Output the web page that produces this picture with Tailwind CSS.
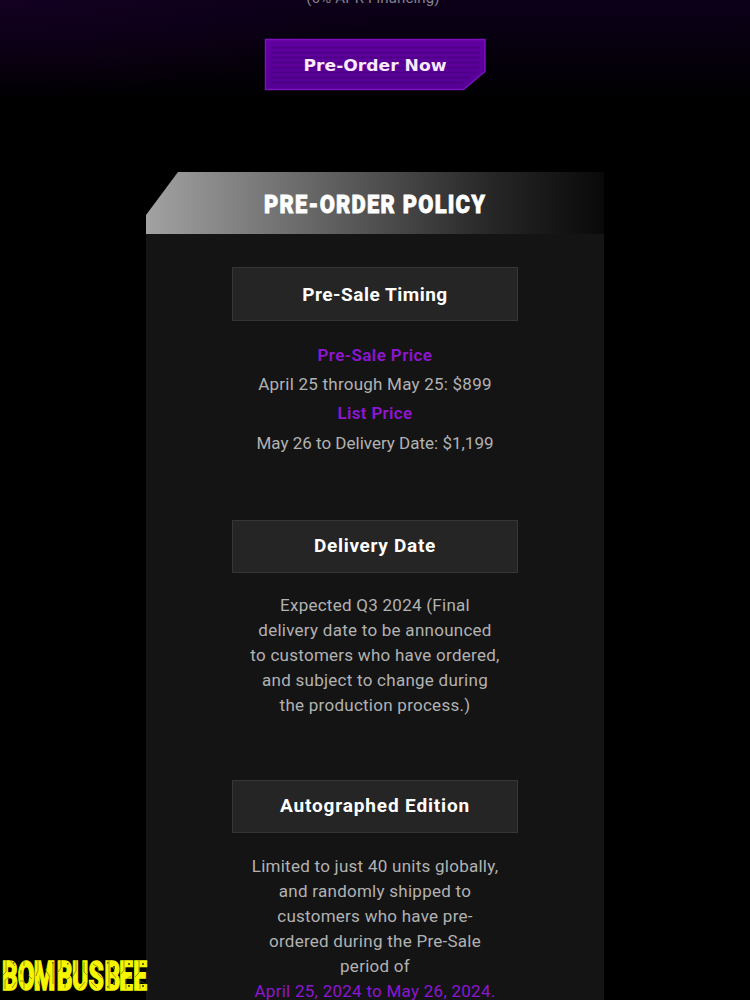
<!DOCTYPE html>
<html lang="en">
<head>
  <meta charset="UTF-8" />
  <meta name="viewport" content="width=device-width, initial-scale=1.0"/>
  <title>Pre-Order Policy</title>
  <script src="https://cdn.jsdelivr.net/npm/@tailwindcss/browser@4"></script>
</head>
<body class="relative h-[1000px] overflow-hidden bg-black font-['Roboto',sans-serif] text-[#b2b2b2]">

  <!-- Hero bottom -->
  <section class="flex h-[172px] flex-col items-center bg-[radial-gradient(ellipse_380px_100px_at_0_0,#1c002b80,transparent),linear-gradient(#0c0019,#000_100px)]">
    <p class="-mt-[12px] h-[51px] pr-1 text-[15px] leading-5 tracking-[0.15px] text-[#85818c]">(0% APR Financing)</p>
    <a href="#" class="block h-[52px] w-[222px]">
      <svg class="block overflow-visible" width="222" height="52" viewBox="0 0 222 52">
        <defs>
          <linearGradient id="btn" x1="0" y1="0" x2="0" y2="1">
            <stop offset="0" stop-color="#6200a2"/>
            <stop offset="1" stop-color="#550095"/>
          </linearGradient>
          <pattern id="lines" width="5" height="5" patternUnits="userSpaceOnUse">
            <rect y="2.5" width="5" height="2" fill="#450079"/>
          </pattern>
        </defs>
        <path d="M1.5 .5H221V32.5L199.5 50.5H1.5Z" fill="url(#btn)" stroke="#7b10bd" stroke-width="1.5"/>
        <path d="M7 4H216V31L195 47H7Z" fill="url(#lines)" fill-opacity=".6"/>
        <text x="39.5" y="32" textLength="143" lengthAdjust="spacingAndGlyphs" font-family="DejaVu Sans" font-weight="700" font-size="16.5" fill="#fbeaff">Pre-Order Now</text>
      </svg>
    </a>
  </section>

  <!-- Policy card -->
  <main class="mx-auto h-[828px] w-[458px] bg-[#141414] text-center">
    <svg class="block bg-black" width="458" height="62" viewBox="0 0 458 62">
      <defs>
        <linearGradient id="head" x1="0" x2="1">
          <stop offset="0" stop-color="#a2a2a2"/>
          <stop offset=".5" stop-color="#505050"/>
          <stop offset=".75" stop-color="#272727"/>
          <stop offset="1" stop-color="#090909"/>
        </linearGradient>
      </defs>
      <path d="M32 0H458V62H0V43Z" fill="url(#head)"/>
      <g transform="translate(118 41) scale(.86 1)">
        <text textLength="257" lengthAdjust="spacing" font-family="Roboto" font-weight="900" font-size="25.5" fill="#fff" stroke="#fff" stroke-width=".8">PRE-ORDER POLICY</text>
      </g>
    </svg>

    <div class="flex flex-col items-center pt-[33px]">
      <h3 class="flex h-[54px] w-[286px] items-center justify-center border border-[#363636] bg-[#252525] pt-0.5 text-[19px] font-bold tracking-[0.5px] text-white">Pre-Sale Timing</h3>
      <div class="mt-5 text-[17px] leading-[29.2px]">
        <p class="font-semibold tracking-[0.42px] text-[#8d16d2]">Pre-Sale Price</p>
        <p class="tracking-[0.23px]">April 25 through May 25: $899</p>
        <p class="font-semibold tracking-[0.3px] text-[#8d16d2]">List Price</p>
        <p>May 26 to Delivery Date: $1,199</p>
      </div>

      <h3 class="mt-[62px] flex h-[53px] w-[286px] items-center justify-center border border-[#363636] bg-[#252525] text-[19px] font-bold tracking-[0.7px] text-white">Delivery Date</h3>
      <div class="mt-5 text-[17px] leading-[25px] tracking-[0.26px]">
        <p>Expected Q3 2024 (Final</p>
        <p>delivery date to be announced</p>
        <p>to customers who have ordered,</p>
        <p>and subject to change during</p>
        <p>the production process.)</p>
      </div>

      <h3 class="mt-[62px] flex h-[53px] w-[286px] items-center justify-center border border-[#363636] bg-[#252525] text-[19px] font-bold tracking-[0.85px] text-white">Autographed Edition</h3>
      <div class="mt-[21px] text-[17px] leading-[25px] tracking-[0.26px]">
        <p>Limited to just 40 units globally,</p>
        <p>and randomly shipped to</p>
        <p>customers who have pre-</p>
        <p>ordered during the Pre-Sale</p>
        <p>period of</p>
        <p class="text-[#8d16d2]">April 25, 2024 to May 26, 2024.</p>
      </div>
    </div>
  </main>

  <!-- Brand mark pinned to the corner -->
  <svg class="absolute bottom-0 left-0" width="150" height="50" viewBox="0 0 150 50">
    <g transform="translate(0 39.5) scale(.86 1.45)">
      <text x="2.4 20.5 39.2 66 83.6 103 121.4 138.8 155" font-family="Roboto" font-weight="900" font-size="28.5" fill="#f6f600" stroke="#f6f600" stroke-width="1">BOMBUSBEE</text>
    </g>
    <!-- panel seams and rivets -->
    <g fill="none" stroke="#5c5c00" stroke-width=".6">
      <path d="M6 10V22L3 25M10 10L15 16M5 39V30L9 27M12 38L16 32M24 10V16M21 20V24M28 25L32 29M20 31H24V39M38 10V20L36 26M45 19L50 27M53 12V34M38 31L40 36M61 10V18L58 22M65 38V31L70 27M76 10V21L73 26M84 12V22L87 25M79 39L85 32M93 14L98 17V24L102 28M91 32L97 38M109 10V39M112 23L116 28M124 10V20L121 24M126 39V30L131 26M139 10V23L135 27M140 39V31L146 34"/>
    </g>
    <path d="M13 12h1.5v1.5H13zM52 12h1.5v1.5H52zM67 13h1.5v1.5H67zM107 12h1.5v1.5H107zM113 16h2v3h-2zM113 32h2v3h-2zM107 36h1.5v1.5H107zM128 13h2v2h-2zM128 35h2v2h-2zM142 13h2v2h-2zM142 35h2v2h-2z" fill="#666600"/>
  </svg>
</body>
</html>
